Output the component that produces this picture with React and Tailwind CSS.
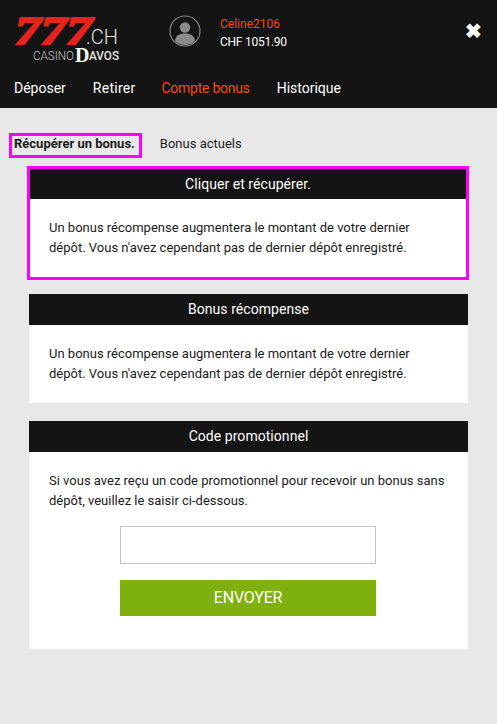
import React from 'react';

function Card({ title, highlighted, children, className = '' }) {
    return (
        <section className={`bg-white ${highlighted ? 'mr-[-1px] ml-[-2px] border-3 border-[#ff00ff]' : ''} ${className}`}>
            <h2 className={`bg-[#141414] text-center text-[14px] tracking-[0.05px] text-white ${highlighted ? 'h-[30px] leading-[30px]' : 'h-[31px] leading-[31px]'}`}>
                {title}
            </h2>
            {children}
        </section>
    );
}

function Avatar() {
    return (
        <svg width="32" height="32" viewBox="0 0 32 32" className="mt-[-1px]">
            <circle cx="16" cy="16" r="15" fill="none" stroke="#8a8a8a" strokeWidth="1.2" />
            <circle cx="16" cy="12.5" r="5.2" fill="#8a8a8a" />
            <path d="M6 26 C6.5 20.5 10 18.6 16 18.6 C22 18.6 25.5 20.5 26 26 C23.5 28.7 20 30 16 30 C12 30 8.5 28.7 6 26 Z" fill="#8a8a8a" />
        </svg>
    );
}

function Logo() {
    return (
        <svg width="106" height="49" viewBox="0 0 106 49" className="shrink-0 overflow-visible">
            <text x="1" y="29" fontFamily="Liberation Serif" fontSize="40" fontWeight="700" fontStyle="italic" fill="#e5231f" stroke="#e5231f" strokeWidth="2.2" textLength="77" lengthAdjust="spacingAndGlyphs">777</text>
            <text x="72" y="29" fontFamily="Roboto" fontSize="20" fontWeight="300" fill="#e6e6e6" textLength="32" lengthAdjust="spacingAndGlyphs">.CH</text>
            <text x="19" y="45" fontFamily="Roboto" fontSize="12" fontWeight="300" fill="#c8c8c8" textLength="41" lengthAdjust="spacingAndGlyphs">CASINO</text>
            <text x="61" y="47" fontFamily="Liberation Serif" fontSize="20" fontWeight="700" fill="#ffffff">D</text>
            <text x="75" y="45" fontFamily="Roboto" fontSize="12" fontWeight="500" fill="#e6e6e6" textLength="30" lengthAdjust="spacingAndGlyphs">AVOS</text>
        </svg>
    );
}

export default function App() {
    return (
        <div className="min-h-[724px] bg-[#e8e8e8] font-['Roboto',sans-serif] text-[#1a1a1a]">
            <header className="h-[108px] bg-[#141414] px-[14px] pt-[15px]">
                <div className="flex h-[60px] items-start">
                    <Logo />
                    <div className="ml-[49px] pt-[1px]"><Avatar /></div>
                    <div className="ml-[19px] text-[12px] leading-[18px]">
                        <p className="text-[#f04e0b]">Celine2106</p>
                        <p className="tracking-[-0.25px] text-white">CHF 1051.90</p>
                    </div>
                    <button type="button" className="mt-[6px] mr-[1px] ml-auto text-[20px] leading-[20px] font-bold text-white">✖</button>
                </div>
                <nav className="mt-[3px] flex text-[14px] leading-[20px] text-white">
                    <a className="mr-[27px]">Déposer</a>
                    <a className="mr-[26px] tracking-[0.25px]">Retirer</a>
                    <a className="mr-[27px] tracking-[-0.25px] text-[#f04e0b]">Compte bonus</a>
                    <a>Historique</a>
                </nav>
            </header>

            <main className="px-[29px]">
                <div className="mt-[25px] ml-[-20px] flex items-start text-[13px]">
                    <span className="h-[25px] border-3 border-[#ff00ff] pr-[4px] pl-[2px] leading-[15px] font-bold">Récupérer un bonus.</span>
                    <span className="mt-[3px] ml-[18px] leading-[15px]">Bonus actuels</span>
                </div>

                <Card title="Cliquer et récupérer." highlighted className="mt-[8px]">
                    <p className="px-[19px] pt-[19px] pb-[19px] text-[13px] leading-[20px]">
                        Un bonus récompense augmentera le montant de votre dernier dépôt. Vous n'avez cependant pas de dernier dépôt enregistré.
                    </p>
                </Card>

                <Card title="Bonus récompense" className="mt-[14px]">
                    <p className="px-[20px] pt-[19px] pb-[19px] text-[13px] leading-[20px]">
                        Un bonus récompense augmentera le montant de votre dernier dépôt. Vous n'avez cependant pas de dernier dépôt enregistré.
                    </p>
                </Card>

                <Card title="Code promotionnel" className="mt-[18px]">
                    <div className="px-[20px] pt-[19px] pb-[33px]">
                        <p className="text-[13px] leading-[20px]">
                            Si vous avez reçu un code promotionnel pour recevoir un bonus sans dépôt, veuillez le saisir ci-dessous.
                        </p>
                        <div className="mt-[15px] ml-[71px] flex flex-col">
                            <input type="text" className="h-[38px] w-[256px] border border-[#c4c4c4] bg-white" />
                            <button type="button" className="mt-[16px] h-[36px] w-[256px] bg-[#7fb10e] text-[16px] tracking-[-0.2px] text-white">ENVOYER</button>
                        </div>
                    </div>
                </Card>
            </main>
        </div>
    );
}
